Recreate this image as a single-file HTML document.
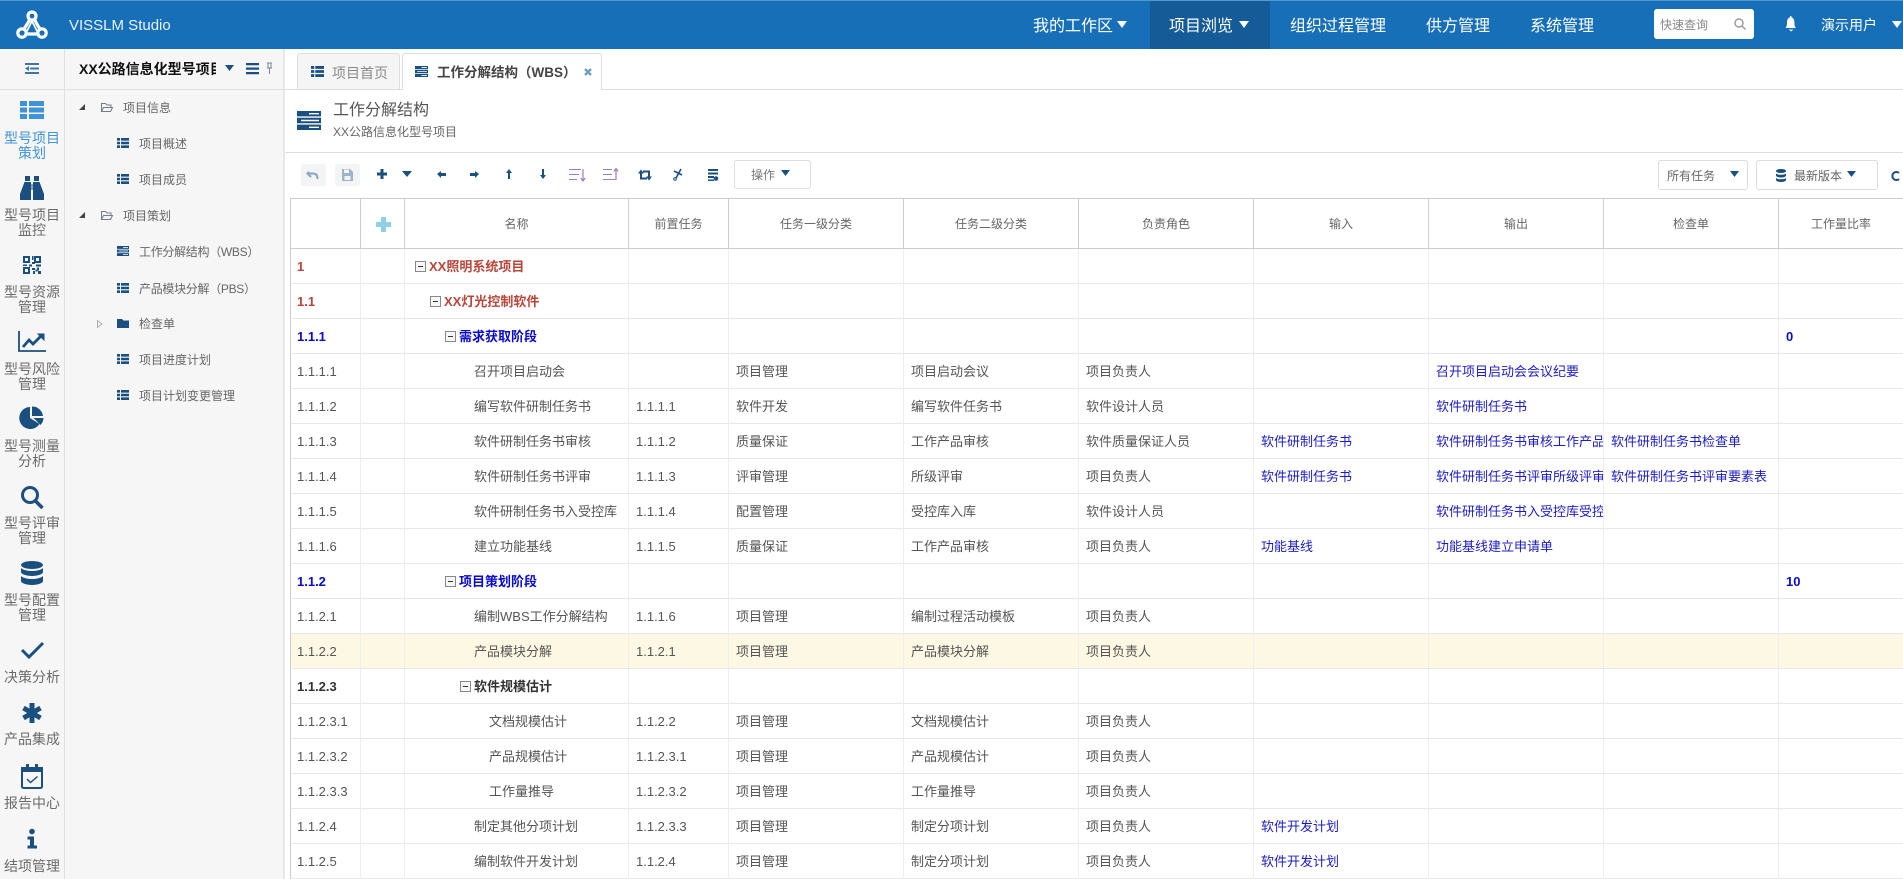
<!DOCTYPE html>
<html lang="zh-CN">
<head>
<meta charset="utf-8">
<title>VISSLM Studio</title>
<style>
html,body{margin:0;padding:0;background:#fff;}
body{position:relative;width:1903px;height:879px;overflow:hidden;font-family:"Liberation Sans","Noto Sans CJK SC",sans-serif;font-size:13px;color:#555;}
.a{position:absolute;white-space:nowrap;}
.b{position:absolute;box-sizing:border-box;}
#hdr{position:absolute;left:0;top:0;width:1903px;height:49px;background:#176fb8;border-top:1px solid #4f9bd0;box-sizing:border-box;}
.nv{color:#fff;font-size:16px;line-height:20px;top:17px;}
.sl{position:absolute;left:0;width:64px;text-align:center;font-size:14px;line-height:15px;color:#6b6b6b;white-space:nowrap;}
.tr{font-size:12px;line-height:16px;color:#666;}
#tw{position:absolute;left:290px;top:198px;width:1613px;height:681px;overflow:hidden;}
table{border-collapse:separate;border-spacing:0;table-layout:fixed;width:1613px;}
th{box-sizing:border-box;height:51px;border-top:1px solid #ccc;border-bottom:1px solid #ccc;border-right:1px solid #ccc;font-weight:normal;font-size:12px;color:#666;text-align:center;padding:0;}
th:first-child{border-left:1px solid #ccc;}
th:last-child{border-right:none;}
td{box-sizing:border-box;height:35px;border-bottom:1px solid #e8e8e8;border-right:1px solid #eee;padding:1px 0 0 7px;font-size:13px;line-height:16px;color:#555;white-space:nowrap;overflow:hidden;}
td:first-child{border-left:1px solid #ccc;padding-left:6px;font-size:13px;}
td:last-child{border-right:none;}
.r td{color:#b8453a;font-weight:bold;}
.u td{color:#0a0acb;font-weight:bold;}
.k td{color:#333;font-weight:bold;}
.s td{background:#fdf8e3;}
td.l{color:#1c1cc4;}
.bx{display:inline-block;box-sizing:border-box;width:11px;height:11px;border:1px solid #888;background:#f6f6f6;position:relative;vertical-align:-1px;margin-right:3px;}
.bx:after{content:"";position:absolute;left:2px;top:4px;width:5px;height:1px;background:#333;}
.p1{padding-left:10px!important}.p2{padding-left:25px!important}.p3{padding-left:40px!important}.p4{padding-left:55px!important}
.t4{padding-left:69px!important}.t5{padding-left:84px!important}
</style>
</head>
<body>

<div id="hdr"></div>
<div class="a" style="left:69px;top:16px;color:#e8f2fa;font-size:15px;line-height:20px;">VISSLM Studio</div>
<div class="b" style="left:1150px;top:1px;width:120px;height:48px;background:#155b97;"></div>
<div class="a nv" style="left:1033px;">我的工作区</div>
<div class="a nv" style="left:1169px;">项目浏览</div>
<div class="a nv" style="left:1290px;">组织过程管理</div>
<div class="a nv" style="left:1426px;">供方管理</div>
<div class="a nv" style="left:1530px;">系统管理</div>
<div class="b" style="left:1654px;top:9px;width:100px;height:30px;background:#fff;border-radius:3px;"></div>
<div class="a" style="left:1660px;top:17px;font-size:12px;line-height:16px;color:#888;">快速查询</div>
<div class="a" style="left:1821px;top:15px;font-size:14px;line-height:20px;color:#fff;">演示用户</div>

<!-- left rail -->
<div class="b" style="left:0;top:49px;width:284px;height:830px;background:#f6f6f6;"></div>
<div class="b" style="left:64px;top:49px;width:1px;height:830px;background:#e0e0e0;"></div>
<div class="b" style="left:283px;top:49px;width:2px;height:830px;background:#e8e8e8;"></div>
<div class="b" style="left:0;top:89px;width:284px;height:1px;background:#e0e0e0;"></div>

<div class="sl" style="top:131px;color:#3f93d8;">型号项目<br>策划</div>
<div class="sl" style="top:208px;">型号项目<br>监控</div>
<div class="sl" style="top:285px;">型号资源<br>管理</div>
<div class="sl" style="top:362px;">型号风险<br>管理</div>
<div class="sl" style="top:439px;">型号测量<br>分析</div>
<div class="sl" style="top:516px;">型号评审<br>管理</div>
<div class="sl" style="top:593px;">型号配置<br>管理</div>
<div class="sl" style="top:670px;">决策分析</div>
<div class="sl" style="top:732px;">产品集成</div>
<div class="sl" style="top:796px;">报告中心</div>
<div class="sl" style="top:859px;">结项管理</div>

<!-- project tree -->
<div class="a" style="left:79px;top:59px;width:137px;overflow:hidden;font-size:14px;line-height:20px;font-weight:bold;color:#111;">XX公路信息化型号项目</div>
<div class="a tr" style="left:123px;top:100px;">项目信息</div>
<div class="a tr" style="left:139px;top:136px;">项目概述</div>
<div class="a tr" style="left:139px;top:172px;">项目成员</div>
<div class="a tr" style="left:123px;top:208px;">项目策划</div>
<div class="a tr" style="left:139px;top:244px;letter-spacing:-.3px;">工作分解结构（WBS）</div>
<div class="a tr" style="left:139px;top:281px;letter-spacing:-.3px;">产品模块分解（PBS）</div>
<div class="a tr" style="left:139px;top:316px;">检查单</div>
<div class="a tr" style="left:139px;top:352px;">项目进度计划</div>
<div class="a tr" style="left:139px;top:388px;">项目计划变更管理</div>

<!-- tabs -->
<div class="b" style="left:285px;top:89px;width:1618px;height:1px;background:#dedede;"></div>
<div class="b" style="left:297px;top:53px;width:103px;height:36px;background:#f5f5f5;border:1px solid #dedede;border-bottom:none;border-radius:3px 3px 0 0;"></div>
<div class="b" style="left:402px;top:53px;width:200px;height:37px;background:#fff;border:1px solid #dedede;border-bottom:none;border-radius:3px 3px 0 0;"></div>
<div class="a" style="left:332px;top:63px;font-size:14px;line-height:20px;color:#8a8a8a;">项目首页</div>
<div class="a" style="left:437px;top:63px;font-size:13.5px;line-height:20px;font-weight:bold;color:#444;">工作分解结构（WBS）</div>

<!-- page title -->
<div class="a" style="left:333px;top:100px;font-size:16px;line-height:22px;color:#555;">工作分解结构</div>
<div class="a" style="left:333px;top:123px;font-size:12px;line-height:18px;color:#666;">XX公路信息化型号项目</div>
<div class="b" style="left:285px;top:152px;width:1618px;height:1px;background:#dedede;"></div>

<!-- toolbar -->
<div class="b" style="left:301px;top:164px;width:25px;height:22px;background:#f2f4f5;border-radius:3px;"></div>
<div class="b" style="left:335px;top:164px;width:25px;height:22px;background:#f2f4f5;border-radius:3px;"></div>
<div class="b" style="left:734px;top:160px;width:77px;height:29px;border:1px solid #ddd;border-radius:3px;"></div>
<div class="a" style="left:751px;top:167px;font-size:12px;line-height:16px;color:#777;">操作</div>
<div class="b" style="left:1658px;top:160px;width:90px;height:30px;border:1px solid #ddd;border-radius:3px;"></div>
<div class="a" style="left:1667px;top:168px;font-size:12px;line-height:16px;color:#666;">所有任务</div>
<div class="b" style="left:1756px;top:160px;width:122px;height:30px;border:1px solid #ddd;border-radius:3px;"></div>
<div class="a" style="left:1794px;top:168px;font-size:12px;line-height:16px;color:#666;">最新版本</div>

<!-- table -->
<div id="tw">
<table>
<colgroup><col style="width:71px"><col style="width:44px"><col style="width:224px"><col style="width:100px"><col style="width:175px"><col style="width:175px"><col style="width:175px"><col style="width:175px"><col style="width:175px"><col style="width:175px"><col style="width:124px"></colgroup>
<thead><tr><th></th><th></th><th>名称</th><th>前置任务</th><th>任务一级分类</th><th>任务二级分类</th><th>负责角色</th><th>输入</th><th>输出</th><th>检查单</th><th>工作量比率</th></tr></thead>
<tbody>
<tr class="r"><td>1</td><td></td><td class="p1"><span class="bx"></span>XX照明系统项目</td><td></td><td></td><td></td><td></td><td></td><td></td><td></td><td></td></tr>
<tr class="r"><td>1.1</td><td></td><td class="p2"><span class="bx"></span>XX灯光控制软件</td><td></td><td></td><td></td><td></td><td></td><td></td><td></td><td></td></tr>
<tr class="u"><td>1.1.1</td><td></td><td class="p3"><span class="bx"></span>需求获取阶段</td><td></td><td></td><td></td><td></td><td></td><td></td><td></td><td>0</td></tr>
<tr><td>1.1.1.1</td><td></td><td class="t4">召开项目启动会</td><td></td><td>项目管理</td><td>项目启动会议</td><td>项目负责人</td><td class="l"></td><td class="l">召开项目启动会会议纪要</td><td class="l"></td><td></td></tr>
<tr><td>1.1.1.2</td><td></td><td class="t4">编写软件研制任务书</td><td>1.1.1.1</td><td>软件开发</td><td>编写软件任务书</td><td>软件设计人员</td><td class="l"></td><td class="l">软件研制任务书</td><td class="l"></td><td></td></tr>
<tr><td>1.1.1.3</td><td></td><td class="t4">软件研制任务书审核</td><td>1.1.1.2</td><td>质量保证</td><td>工作产品审核</td><td>软件质量保证人员</td><td class="l">软件研制任务书</td><td class="l">软件研制任务书审核工作产品审核</td><td class="l">软件研制任务书检查单</td><td></td></tr>
<tr><td>1.1.1.4</td><td></td><td class="t4">软件研制任务书评审</td><td>1.1.1.3</td><td>评审管理</td><td>所级评审</td><td>项目负责人</td><td class="l">软件研制任务书</td><td class="l">软件研制任务书评审所级评审记录</td><td class="l">软件研制任务书评审要素表</td><td></td></tr>
<tr><td>1.1.1.5</td><td></td><td class="t4">软件研制任务书入受控库</td><td>1.1.1.4</td><td>配置管理</td><td>受控库入库</td><td>软件设计人员</td><td class="l"></td><td class="l">软件研制任务书入受控库受控库</td><td class="l"></td><td></td></tr>
<tr><td>1.1.1.6</td><td></td><td class="t4">建立功能基线</td><td>1.1.1.5</td><td>质量保证</td><td>工作产品审核</td><td>项目负责人</td><td class="l">功能基线</td><td class="l">功能基线建立申请单</td><td class="l"></td><td></td></tr>
<tr class="u"><td>1.1.2</td><td></td><td class="p3"><span class="bx"></span>项目策划阶段</td><td></td><td></td><td></td><td></td><td></td><td></td><td></td><td>10</td></tr>
<tr><td>1.1.2.1</td><td></td><td class="t4">编制WBS工作分解结构</td><td>1.1.1.6</td><td>项目管理</td><td>编制过程活动模板</td><td>项目负责人</td><td></td><td></td><td></td><td></td></tr>
<tr class="s"><td>1.1.2.2</td><td></td><td class="t4">产品模块分解</td><td>1.1.2.1</td><td>项目管理</td><td>产品模块分解</td><td>项目负责人</td><td></td><td></td><td></td><td></td></tr>
<tr class="k"><td>1.1.2.3</td><td></td><td class="p4"><span class="bx"></span>软件规模估计</td><td></td><td></td><td></td><td></td><td></td><td></td><td></td><td></td></tr>
<tr><td>1.1.2.3.1</td><td></td><td class="t5">文档规模估计</td><td>1.1.2.2</td><td>项目管理</td><td>文档规模估计</td><td>项目负责人</td><td></td><td></td><td></td><td></td></tr>
<tr><td>1.1.2.3.2</td><td></td><td class="t5">产品规模估计</td><td>1.1.2.3.1</td><td>项目管理</td><td>产品规模估计</td><td>项目负责人</td><td></td><td></td><td></td><td></td></tr>
<tr><td>1.1.2.3.3</td><td></td><td class="t5">工作量推导</td><td>1.1.2.3.2</td><td>项目管理</td><td>工作量推导</td><td>项目负责人</td><td></td><td></td><td></td><td></td></tr>
<tr><td>1.1.2.4</td><td></td><td class="t4">制定其他分项计划</td><td>1.1.2.3.3</td><td>项目管理</td><td>制定分项计划</td><td>项目负责人</td><td class="l">软件开发计划</td><td></td><td></td><td></td></tr>
<tr><td>1.1.2.5</td><td></td><td class="t4">编制软件开发计划</td><td>1.1.2.4</td><td>项目管理</td><td>制定分项计划</td><td>项目负责人</td><td class="l">软件开发计划</td><td></td><td></td><td></td></tr>
</tbody>
</table>
</div>

<!-- icon overlay in page coordinates -->
<svg width="1903" height="879" viewBox="0 0 1903 879" style="position:absolute;left:0;top:0;pointer-events:none;">
<defs>
<symbol id="l" viewBox="0 0 12 10" preserveAspectRatio="none"><path d="M0 0h3v2.6H0zM4 0h8v2.6H4zM0 3.7h3v2.6H0zM4 3.7h8v2.6H4zM0 7.4h3V10H0zM4 7.4h8V10H4z"/></symbol>
<symbol id="w" viewBox="0 0 24 19" preserveAspectRatio="none"><path d="M0 0h24v5.4H0zM0 6.8h24v5.4H0zM0 13.6h24V19H0z"/><path fill="#fff" d="M12 2h10v1.4H12zM4 8.8h18v1.4H4zM12 15.6h10V17H12z"/></symbol>
</defs>

<!-- logo -->
<g fill="none" stroke="#fff" stroke-width="3.2">
<circle cx="32" cy="16" r="4"/><circle cx="22" cy="33" r="4.200"/><circle cx="42" cy="33" r="4.200"/>
<path d="M29.500 20C28 23 26 26 24 29M35 20C36 23 38 26 40 29M26.500 34H37.500"/>
<path d="M32 21L27 31M32 21L37 31" stroke-width="1.800"/>
</g>

<!-- header carets and icons -->
<g fill="#fff">
<path d="M1117 21h10l-5 7zM1239 21h10l-5 7zM1892 21h10l-5 7z"/>
<path d="M1785.500 28c1.500-1.500 1.500-4 1.500-6 0-2.500 1.500-4.500 3-4.800v-1.200h1.400v1.200c1.500.3 3 2.300 3 4.800 0 2 0 4.500 1.600 6zM1788.800 29.500h4.600l-2.300 2z"/>
</g>
<g fill="none" stroke="#999" stroke-width="1.400"><circle cx="1739" cy="23" r="4"/><path d="M1742 26l3.500 3.500"/></g>

<!-- active tab close -->
<path d="M585 69l6 6M591 69l-6 6" fill="none" stroke="#6f9cc2" stroke-width="2.400"/>

<!-- rail toggle -->
<path fill="#3f74a8" d="M25 63h14v2H25zM30 67.500h9v2h-9zM25 72h14v2H25zM29 66v5l-4-2.500z"/>

<!-- tree head icons -->
<path fill="#1b4f80" d="M225 65h9l-4.500 6z"/>
<path fill="#1b4f80" d="M246 63h13v2.200h-13zM246 67.500h13v2.200h-13zM246 72h13v2.200h-13z"/>
<g fill="none" stroke="#7a8796" stroke-width="1"><path d="M267 63h5M268 63v5M271 63v5M267 68h5M269.500 68v6"/></g>

<!-- rail icons -->
<g fill="#3f93d8"><path d="M20 101h7v5h-7zM29 101h15v5H29zM20 107.500h7v5h-7zM29 107.500h15v5H29zM20 114h7v5h-7zM29 114h15v5H29z"/></g>
<g fill="#1b4f80">
<path d="M25 176h5v5h-5zM34 176h5v5h-5zM24.500 182H31v18H20v-6zM33 182h6.500L44 194v6H33zM31.500 184h1v6h-1z"/>
<path d="M23 256h7v7h-7zM34 256h7v7h-7zM23 267h7v7h-7z"/>
<path fill="#f5f6f7" d="M25 258h3v3h-3zM36 258h3v3h-3zM25 269h3v3h-3z"/>
<path d="M32 256h1.500v4H32zM32 262h3v2h-3zM23 264.500h4v1.500h-4zM29 264.500h3v2h-3zM36 264.500h5v2h-5zM32 268h3v2h-3zM37 267.500h2v3h-2zM33 271h2v3h-2zM38 271h3v3h-3zM35.500 269.500h2v2h-2z"/>
<path d="M30 418V407A11 11 0 1 0 39.500 424Z"/><path d="M32 406.500A11 11 0 0 1 43 416H32Z"/><path d="M33.500 418H43.500A11 11 0 0 1 40.500 425Z"/>
<path d="M32 561c6 0 11 1.800 11 4s-5 4-11 4-11-1.800-11-4 5-4 11-4zM21 568c2 2 7 3 11 3s9-1 11-3v4c0 2-5 4-11 4s-11-2-11-4zM21 576c2 2 7 3 11 3s9-1 11-3v5c0 2-5 4-11 4s-11-2-11-4z"/>
<path d="M26 764h3v5h-3zM35 764h3v5h-3z"/>
<path d="M21 767h22v5H21z"/>
<circle cx="32" cy="831.500" r="2.800"/><path d="M27.500 836.500h6.500v9h3v3H27.500v-3h2.500v-6h-2.500z"/>
</g>
<g fill="none" stroke="#1b4f80">
<path d="M19 331v20h27" stroke-width="1.800"/>
<path d="M23 347l6-7 4 4 9-9" stroke-width="2.800"/>
<path d="M38 334h6v6z" fill="#1b4f80" stroke-width="1"/>
<circle cx="30" cy="495" r="7.500" stroke-width="3"/><path d="M35.500 501l7 7" stroke-width="3.500"/>
<path d="M22 650l7 7 14-14" stroke-width="3"/>
<path d="M32 703v20M23.500 708l17 10M40.500 708l-17 10" stroke-width="5"/>
<rect x="22" y="768" width="20" height="20" rx="1.500" stroke-width="2"/>
<path d="M27 779l3.500 3.500 7-6" stroke-width="1.400"/>
</g>

<!-- sidebar tree icons -->
<g fill="#444"><path d="M85 104v6h-6zM85 212v6h-6z"/></g>
<g fill="none" stroke="#6f7d8c" stroke-width="1">
<path d="M101.500 111.500v-8h4l1.500 1.500h4v2M101.500 111.500l2-4h9l-2 4z"/>
<path d="M101.500 219.500v-8h4l1.500 1.500h4v2M101.500 219.500l2-4h9l-2 4z"/>
</g>
<path d="M97.500 320.500v7l4.500-3.500z" fill="none" stroke="#b0b0b0"/>
<path fill="#1b4f80" d="M117 319h5l1.500 1.500h5.500v7.500h-12z"/>
<g fill="#1b4f80">
<use href="#l" x="117" y="138" width="12" height="10"/>
<use href="#l" x="117" y="174" width="12" height="10"/>
<use href="#w" x="117" y="246" width="12" height="10"/>
<use href="#l" x="117" y="283" width="12" height="10"/>
<use href="#l" x="117" y="354" width="12" height="10"/>
<use href="#l" x="117" y="390" width="12" height="10"/>
<use href="#l" x="311" y="66" width="13" height="11"/>
<use href="#w" x="415" y="66" width="13" height="11"/>
<use href="#w" x="297" y="111" width="24" height="19"/>
</g>

<!-- toolbar icons -->
<g fill="none" stroke="#8ba5bd" stroke-width="2"><path d="M309 172l-1.500 1.500 3.500 3.500M308 173.500h5c3 0 4.500 2 4.500 5.500"/></g>
<path fill="#9db3c7" d="M342 169h8l3 3v9h-11zM344 169.500v3.500h5v-3.500z"/>
<path fill="#f2f4f5" d="M344.500 176h6v4h-6z"/>
<g fill="#1b4f80">
<path d="M380.500 169h3v3.500h3.500v3h-3.500v3.500h-3v-3.500H377v-3h3.500z"/>
<path d="M402 171h10l-5 6z"/>
<path d="M437 174l4-3v2h5v3h-5v2z"/>
<path d="M479 174l-4-3v2h-5v3h5v2z"/>
<path d="M509 169l3 4h-2v6h-2v-6h-2z"/>
<path d="M543 179l3-4h-2v-6h-2v6h-2z"/>
<path d="M781 170h9l-4.500 6z"/>
<path d="M1730 171h9l-4.500 6z"/>
<path d="M1847 171h9l-4.500 6z"/>
<path d="M1781 169c3 0 5 .8 5 2s-2 2-5 2-5-.8-5-2 2-2 5-2zM1776 173.500c1 1 3 1.200 5 1.200s4-.2 5-1.200v2c0 1-2 2-5 2s-5-1-5-2zM1776 178c1 1 3 1.200 5 1.200s4-.2 5-1.200v2c0 1-2 2-5 2s-5-1-5-2z"/>
</g>
<g fill="none" stroke="#a07fb8" stroke-width="1">
<path d="M569 169.500h12M569 174.500h10M569 179.500h8"/><path d="M583 169v11M580.800 178l2.200 3 2.200-3" stroke-width="1.200"/>
<path d="M603 169.500h9M603 174.500h9M603 179.500h13"/><path d="M616 180v-11M613.800 171.500l2.200-3 2.200 3" stroke-width="1.200"/>
</g>
<g fill="none" stroke="#1b4f80">
<path d="M641 172v6.500h6M649 178v-6.500h-6" stroke-width="2"/>
<path d="M638 173.500h6L641 169.500zM646 176.500h6L649 180.500z" fill="#1b4f80" stroke="none"/>
<path d="M681 169l-5 9M674 171l8 4" stroke-width="1.600"/>
<circle cx="675" cy="179" r="1.300" stroke-width="1"/>
<path d="M1899 173a4 4 0 1 0 0 6" stroke-width="2"/>
</g>
<g fill="#1b4f80">
<path d="M708 169h10v2h-10zM708 172.500h10v2h-10zM708 176h6v2h-6zM708 179.500h6v1.500h-6z"/>
<circle cx="716" cy="178.500" r="2.300"/>
</g>

<!-- table plus -->
<path fill="#8fd0e4" d="M381 217h5v5h5v5h-5v5h-5v-5h-5v-5h5z"/>
</svg>
</body>
</html>
